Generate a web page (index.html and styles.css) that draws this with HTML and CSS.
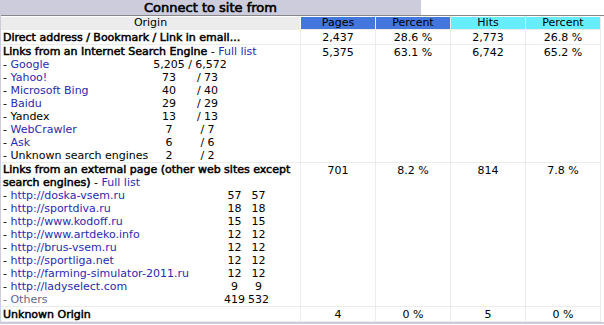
FILE: index.html
```html
<!DOCTYPE html>
<html>
<head>
<meta charset="utf-8">
<title>Connect to site from</title>
<link rel="stylesheet" href="styles.css">
</head>
<body>
<div class="panel">
  <div class="titlebar">
    <div class="title">Connect to site from</div>
    <div class="blank"></div>
  </div>
  <div class="body">
    <div class="inner">
      <table class="data">
        <thead>
          <tr>
            <th class="origin">Origin</th>
            <th class="num pages">Pages</th>
            <th class="num pages">Percent</th>
            <th class="num hits">Hits</th>
            <th class="num hits">Percent</th>
          </tr>
        </thead>
        <tbody>
          <tr>
            <td class="label"><b>Direct address / Bookmark / Link in email...</b></td>
            <td>2,437</td><td>28.6 %</td><td>2,773</td><td>26.8 %</td>
          </tr>
          <tr>
            <td class="label multi">
              <div class="head"><b>Links from an Internet Search Engine</b> - <a href="#">Full list</a></div>
              <table class="sub se">
                <colgroup><col class="se-name"><col class="se-p"><col class="se-h"></colgroup>
                <tr><td class="name">- <a href="#">Google</a></td><td>5,205</td><td>/ 6,572</td></tr>
                <tr><td class="name">- <a href="#">Yahoo!</a></td><td>73</td><td>/ 73</td></tr>
                <tr><td class="name">- <a href="#">Microsoft Bing</a></td><td>40</td><td>/ 40</td></tr>
                <tr><td class="name">- <a href="#">Baidu</a></td><td>29</td><td>/ 29</td></tr>
                <tr><td class="name">- Yandex</td><td>13</td><td>/ 13</td></tr>
                <tr><td class="name">- <a href="#">WebCrawler</a></td><td>7</td><td>/ 7</td></tr>
                <tr><td class="name">- <a href="#">Ask</a></td><td>6</td><td>/ 6</td></tr>
                <tr><td class="name">- Unknown search engines</td><td>2</td><td>/ 2</td></tr>
              </table>
            </td>
            <td>5,375</td><td>63.1 %</td><td>6,742</td><td>65.2 %</td>
          </tr>
          <tr>
            <td class="label multi">
              <div class="head"><b>Links from an external page (other web sites except search engines)</b> - <a href="#">Full list</a></div>
              <table class="sub ext">
                <colgroup><col class="ext-name"><col class="ext-p"><col class="ext-h"></colgroup>
                <tr><td class="name">- <a href="#">http://doska-vsem.ru</a></td><td>57</td><td>57</td></tr>
                <tr><td class="name">- <a href="#">http://sportdiva.ru</a></td><td>18</td><td>18</td></tr>
                <tr><td class="name">- <a href="#">http://www.kodoff.ru</a></td><td>15</td><td>15</td></tr>
                <tr><td class="name">- <a href="#">http://www.artdeko.info</a></td><td>12</td><td>12</td></tr>
                <tr><td class="name">- <a href="#">http://brus-vsem.ru</a></td><td>12</td><td>12</td></tr>
                <tr><td class="name">- <a href="#">http://sportliga.net</a></td><td>12</td><td>12</td></tr>
                <tr><td class="name">- <a href="#">http://farming-simulator-2011.ru</a></td><td>12</td><td>12</td></tr>
                <tr><td class="name">- <a href="#">http://ladyselect.com</a></td><td>9</td><td>9</td></tr>
                <tr><td class="name other">- Others</td><td>419</td><td>532</td></tr>
              </table>
            </td>
            <td>701</td><td>8.2 %</td><td>814</td><td>7.8 %</td>
          </tr>
          <tr>
            <td class="label"><b>Unknown Origin</b></td>
            <td>4</td><td>0 %</td><td>5</td><td>0 %</td>
          </tr>
        </tbody>
      </table>
    </div>
  </div>
</div>
</body>
</html>
```

FILE: styles.css
```css
html, body {
  margin: 0;
  padding: 0;
  background: #ffffff;
}

body {
  font-family: "DejaVu Sans", Verdana, sans-serif;
  font-size: 11px;
  color: #000000;
}

b,
.title {
  font-weight: normal;
  -webkit-text-stroke: 0.5px currentColor;
}

.panel {
  width: 604px;
  background: #ccccdd;
}

.titlebar {
  display: flex;
  height: 15px;
}

.title {
  width: 421px;
  background: #ccccdd;
  font-size: 13px;
  text-align: center;
  line-height: 15px;
  -webkit-text-stroke: 0.6px currentColor;
}

.blank {
  flex: 1;
  background: #ffffff;
}

.body {
  padding: 0 0 2px 1px;
}

.inner {
  background: #ffffff;
  border-top: 1px solid #888888;
  padding-top: 1px;
}

.data {
  border-collapse: separate;
  border-spacing: 0;
  table-layout: fixed;
}

.data th {
  font-weight: normal;
  line-height: 12px;
  padding: 0;
  text-align: center;
  border-right: 1px solid #ececec;
  border-bottom: 1px solid #ececec;
}

.data th.origin {
  width: 299px;
  background: #ececec;
  border-right-color: #ffffff;
}

.data th.num {
  width: 74px;
}

.data th.pages {
  background: #4477dd;
}

.data th.hits {
  background: #66eeff;
}

.data > tbody > tr > td {
  padding: 1px 0 0 0;
  line-height: 13px;
  text-align: center;
  vertical-align: top;
  border-right: 1px solid #ececec;
  border-bottom: 1px solid #ececec;
}

.data > tbody > tr > td.label {
  text-align: left;
  padding-left: 2px;
}

.data > tbody > tr > td.multi {
  padding-top: 0;
}

.data > tbody > tr > td.multi .head {
  line-height: 13px;
  padding-right: 1px;
}

a {
  color: #2a2aae;
  text-decoration: none;
}

.sub {
  border-collapse: collapse;
  table-layout: fixed;
}

.sub td {
  padding: 0;
  line-height: 13px;
  text-align: center;
  white-space: nowrap;
}

.sub td.name {
  text-align: left;
}

.sub td.other {
  color: #666688;
}

.se-name { width: 149px; }
.se-p { width: 34px; }
.se-h { width: 43px; }

.ext-name { width: 219px; }
.ext-p { width: 25px; }
.ext-h { width: 23px; }
```
